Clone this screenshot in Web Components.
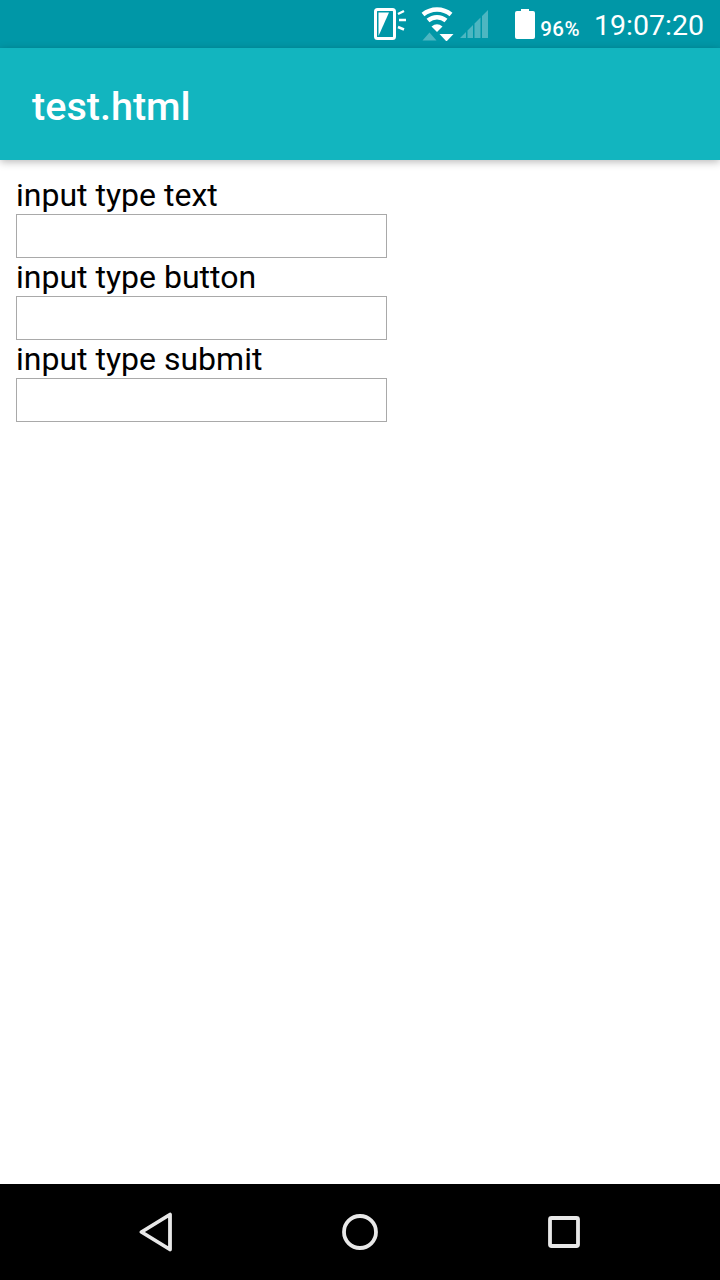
<!DOCTYPE html>
<html>
<head>
<meta charset="utf-8">
<title>test.html</title>
<style>
  html, body { margin: 0; height: 100%; }
  body {
    display: flex;
    flex-direction: column;
    height: 1280px;
    overflow: hidden;
    background: #fff;
    font-family: Roboto, "Liberation Sans", sans-serif;
  }
  x-page { flex: 1; }
</style>
</head>
<body>
<x-status-bar battery="96%" time="19:07:20"></x-status-bar>
<x-app-bar>test.html</x-app-bar>
<x-page>
  <x-field label="input type text"></x-field>
  <x-field label="input type button"></x-field>
  <x-field label="input type submit"></x-field>
</x-page>
<x-nav-bar></x-nav-bar>

<script>
class XStatusBar extends HTMLElement {
  constructor() {
    super();
    this.attachShadow({ mode: 'open' });
    this.shadowRoot.innerHTML = `
      <style>
        :host {
          display: flex;
          align-items: center;
          justify-content: flex-end;
          height: 48px;
          padding-right: 16px;
          background: #0097a7;
          color: #fff;
        }
        svg { display: block; flex: none; }
        .rotate { margin-right: 14px; }
        .wifi { margin-right: 5px; }
        .signal { margin-right: 26px; }
        .level { font-size: 20.5px; font-weight: 500; letter-spacing: .5px; margin: 10px 0 0 5.500px; line-height: 24px; }
        .time { font-size: 28.5px; margin-left: 14px; line-height: 34px; margin-top: 3px; }
      </style>
      <svg class="rotate" width="33" height="32" viewBox="0 0 33 32" fill="none">
        <rect x="1.500" y="1.500" width="19" height="29" rx="2" stroke="#fff" stroke-width="3"/>
        <path d="M4.500 4.500h10.500L4.500 28z" fill="#fff"/>
        <path d="M24 6l6-3M25 12h7M24 19l6 2.500" stroke="#fff" stroke-width="2.500"/>
      </svg>
      <svg class="wifi" width="34" height="34" viewBox="0 0 34 34">
        <path d="M2 7.500A22 22 0 0 1 30 7.500" fill="none" stroke="#fff" stroke-width="4.500"/>
        <path d="M7 13.500A14 14 0 0 1 25 13.500" fill="none" stroke="#fff" stroke-width="4.500"/>
        <path d="M10.500 19.500Q16 15 21.500 19.500L16 25z" fill="#fff"/>
        <path d="M1.500 33.500L8.500 25.500L15.500 33.500z" fill="#fff" opacity=".3"/>
        <path d="M18.500 27h14l-7 7.500z" fill="#fff"/>
      </svg>
      <svg class="signal" width="29" height="30" viewBox="0 0 29 30" fill="#fff" opacity=".3">
        <path d="M0 29l6-6v6zM7.500 29v-7.500l5.500-5.500v13zM14.500 29v-14.500l6-6v20.500zM22 29v-22l6-6v28z"/>
      </svg>
      <svg width="20" height="30" viewBox="0 0 20 30" fill="#fff">
        <path d="M6 0h8v2h4a2 2 0 0 1 2 2v24a2 2 0 0 1-2 2H2a2 2 0 0 1-2-2V4a2 2 0 0 1 2-2h4z"/>
      </svg>
      <span class="level">${this.getAttribute('battery')}</span>
      <span class="time">${this.getAttribute('time')}</span>
    `;
  }
}
customElements.define('x-status-bar', XStatusBar);

class XAppBar extends HTMLElement {
  constructor() {
    super();
    this.attachShadow({ mode: 'open' });
    this.shadowRoot.innerHTML = `
      <style>
        :host {
          display: flex;
          align-items: center;
          position: relative;
          box-sizing: border-box;
          height: 112px;
          padding: 4px 0 0 32px;
          background: #12b5bf;
          color: #fff;
          font-size: 39.6px;
          font-weight: 500;
          box-shadow: 0 2px 8px rgba(0, 0, 0, .28);
        }
      </style>
      <slot></slot>
    `;
  }
}
customElements.define('x-app-bar', XAppBar);

class XPage extends HTMLElement {
  constructor() {
    super();
    this.attachShadow({ mode: 'open' });
    this.shadowRoot.innerHTML = `
      <style>
        :host {
          display: block;
          padding: 16px 16px 0;
          background: #fff;
        }
      </style>
      <slot></slot>
    `;
  }
}
customElements.define('x-page', XPage);

class XField extends HTMLElement {
  constructor() {
    super();
    this.attachShadow({ mode: 'open' });
    this.shadowRoot.innerHTML = `
      <style>
        :host {
          display: block;
          color: #000;
          font-size: 32px;
        }
        label {
          display: block;
          height: 38px;
          line-height: 38px;
        }
        input {
          display: block;
          box-sizing: border-box;
          width: 371px;
          height: 44px;
          margin: 0;
          padding: 0;
          border: 1px solid #a9a9a9;
          background: #fff;
          outline: none;
        }
      </style>
      <label>${this.getAttribute('label')}</label>
      <input type="text">
    `;
  }
}
customElements.define('x-field', XField);

class XNavBar extends HTMLElement {
  constructor() {
    super();
    this.attachShadow({ mode: 'open' });
    this.shadowRoot.innerHTML = `
      <style>
        :host {
          display: grid;
          grid-template-columns: 1fr 1fr 1fr;
          align-items: center;
          justify-items: center;
          height: 96px;
          padding: 0 54px;
          background: #000;
        }
        svg { display: block; }
      </style>
      <svg width="40" height="40" viewBox="0 0 40 40" fill="none" stroke="#e8e8e8" stroke-width="3.800" stroke-linejoin="round">
        <path d="M34 2.500v35L5.500 20z"/>
      </svg>
      <svg width="40" height="40" viewBox="0 0 40 40" fill="none" stroke="#e8e8e8" stroke-width="3.800">
        <circle cx="20" cy="20" r="16"/>
      </svg>
      <svg width="40" height="40" viewBox="0 0 40 40" fill="none" stroke="#e8e8e8" stroke-width="3.800" stroke-linejoin="round">
        <rect x="6" y="6" width="28" height="28" rx="1.500"/>
      </svg>
    `;
  }
}
customElements.define('x-nav-bar', XNavBar);
</script>
</body>
</html>
